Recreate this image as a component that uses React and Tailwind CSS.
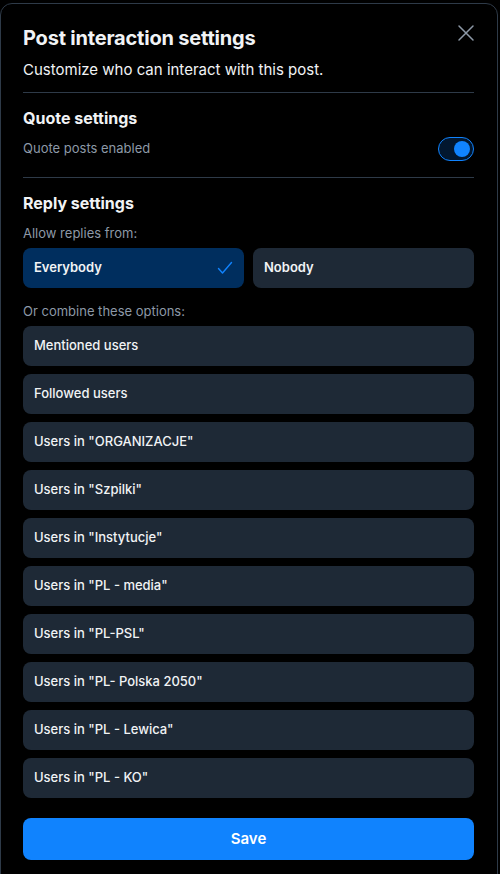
import { useState } from 'react'

const lists = [
  'Mentioned users',
  'Followed users',
  'Users in "ORGANIZACJE"',
  'Users in "Szpilki"',
  'Users in "Instytucje"',
  'Users in "PL - media"',
  'Users in "PL-PSL"',
  'Users in "PL- Polska 2050"',
  'Users in "PL - Lewica"',
  'Users in "PL - KO"',
]

export default function App() {
  const [quotes, setQuotes] = useState(true)
  const [who, setWho] = useState('everybody')

  return (
    <div className="min-h-[874px] bg-black pt-[3px] overflow-hidden" style={{ fontFamily: 'Inter, "Noto Sans", sans-serif' }}>
      <div className="w-[498px] h-[900px] bg-black border border-[#2e3a48] rounded-t-[12px] pl-[22px] pr-[23px] pt-[20px] relative">
        <button className="absolute right-[21px] top-[19px] text-[#8d99a7]">
          <svg width="20" height="20" viewBox="0 0 20 20" fill="none" stroke="currentColor" strokeWidth="1.5" strokeLinecap="round">
            <path d="M3 3l14 14M17 3L3 17" />
          </svg>
        </button>

        {/* Header */}
        <h1 className="text-[20px] leading-[28px] font-bold text-[#f1f3f5] tracking-[-0.2px]">Post interaction settings</h1>
        <p className="mt-[8px] text-[15px] leading-[20px] text-[#f1f3f5]">Customize who can interact with this post.</p>
        <div className="mt-[12px] h-px bg-[#2e3a48]" />

        {/* Quote settings */}
        <h2 className="mt-[13px] text-[16px] leading-[24px] font-bold text-[#f1f3f5]">Quote settings</h2>
        <div className="mt-[7px] flex items-center justify-between">
          <span className="text-[13px] text-[#8d99a7]">Quote posts enabled</span>
          <button
            onClick={() => setQuotes(!quotes)}
            className="w-[36px] h-[24px] rounded-full border border-[#1083fe] bg-[#02172f] flex items-center px-[3px]"
          >
            <span className={`w-[16px] h-[16px] rounded-full bg-[#1083fe] ${quotes ? 'ml-auto' : ''}`} />
          </button>
        </div>
        <div className="mt-[16px] h-px bg-[#2e3a48]" />

        {/* Reply settings */}
        <h2 className="mt-[13px] text-[16px] leading-[24px] font-bold text-[#f1f3f5]">Reply settings</h2>
        <p className="mt-[9px] text-[13px] leading-[18px] text-[#8d99a7]">Allow replies from:</p>
        <div className="mt-[6px] grid grid-cols-2 gap-[9px]">
          {['everybody', 'nobody'].map(k => (
            <button
              key={k}
              onClick={() => setWho(k)}
              className={`h-[40px] rounded-[8px] px-[11px] flex items-center justify-between text-[13px] font-semibold text-[#f1f3f5] ${
                who === k ? 'bg-[#002e5e]' : 'bg-[#1e2936]'
              }`}
            >
              {k === 'everybody' ? 'Everybody' : 'Nobody'}
              {who === k && (
                <svg width="16" height="14" viewBox="0 0 16 14" fill="none" stroke="#1083fe" strokeWidth="1.4" strokeLinecap="round" strokeLinejoin="round">
                  <path d="M1.5 7.5l4 4.5L14.5 1.5" />
                </svg>
              )}
            </button>
          ))}
        </div>
        <p className="mt-[14px] text-[13px] leading-[18px] text-[#8d99a7]">Or combine these options:</p>
        <div className="mt-[6px] flex flex-col gap-[8px]">
          {lists.map(l => (
            <div key={l} className="h-[40px] rounded-[8px] bg-[#1e2936] px-[11px] flex items-center text-[13px] font-medium text-[#f1f3f5]">
              {l}
            </div>
          ))}
        </div>

        <button className="mt-[20px] w-full h-[42px] rounded-[8px] bg-[#1083fe] text-white text-[15px] font-semibold">
          Save
        </button>
      </div>
    </div>
  )
}
